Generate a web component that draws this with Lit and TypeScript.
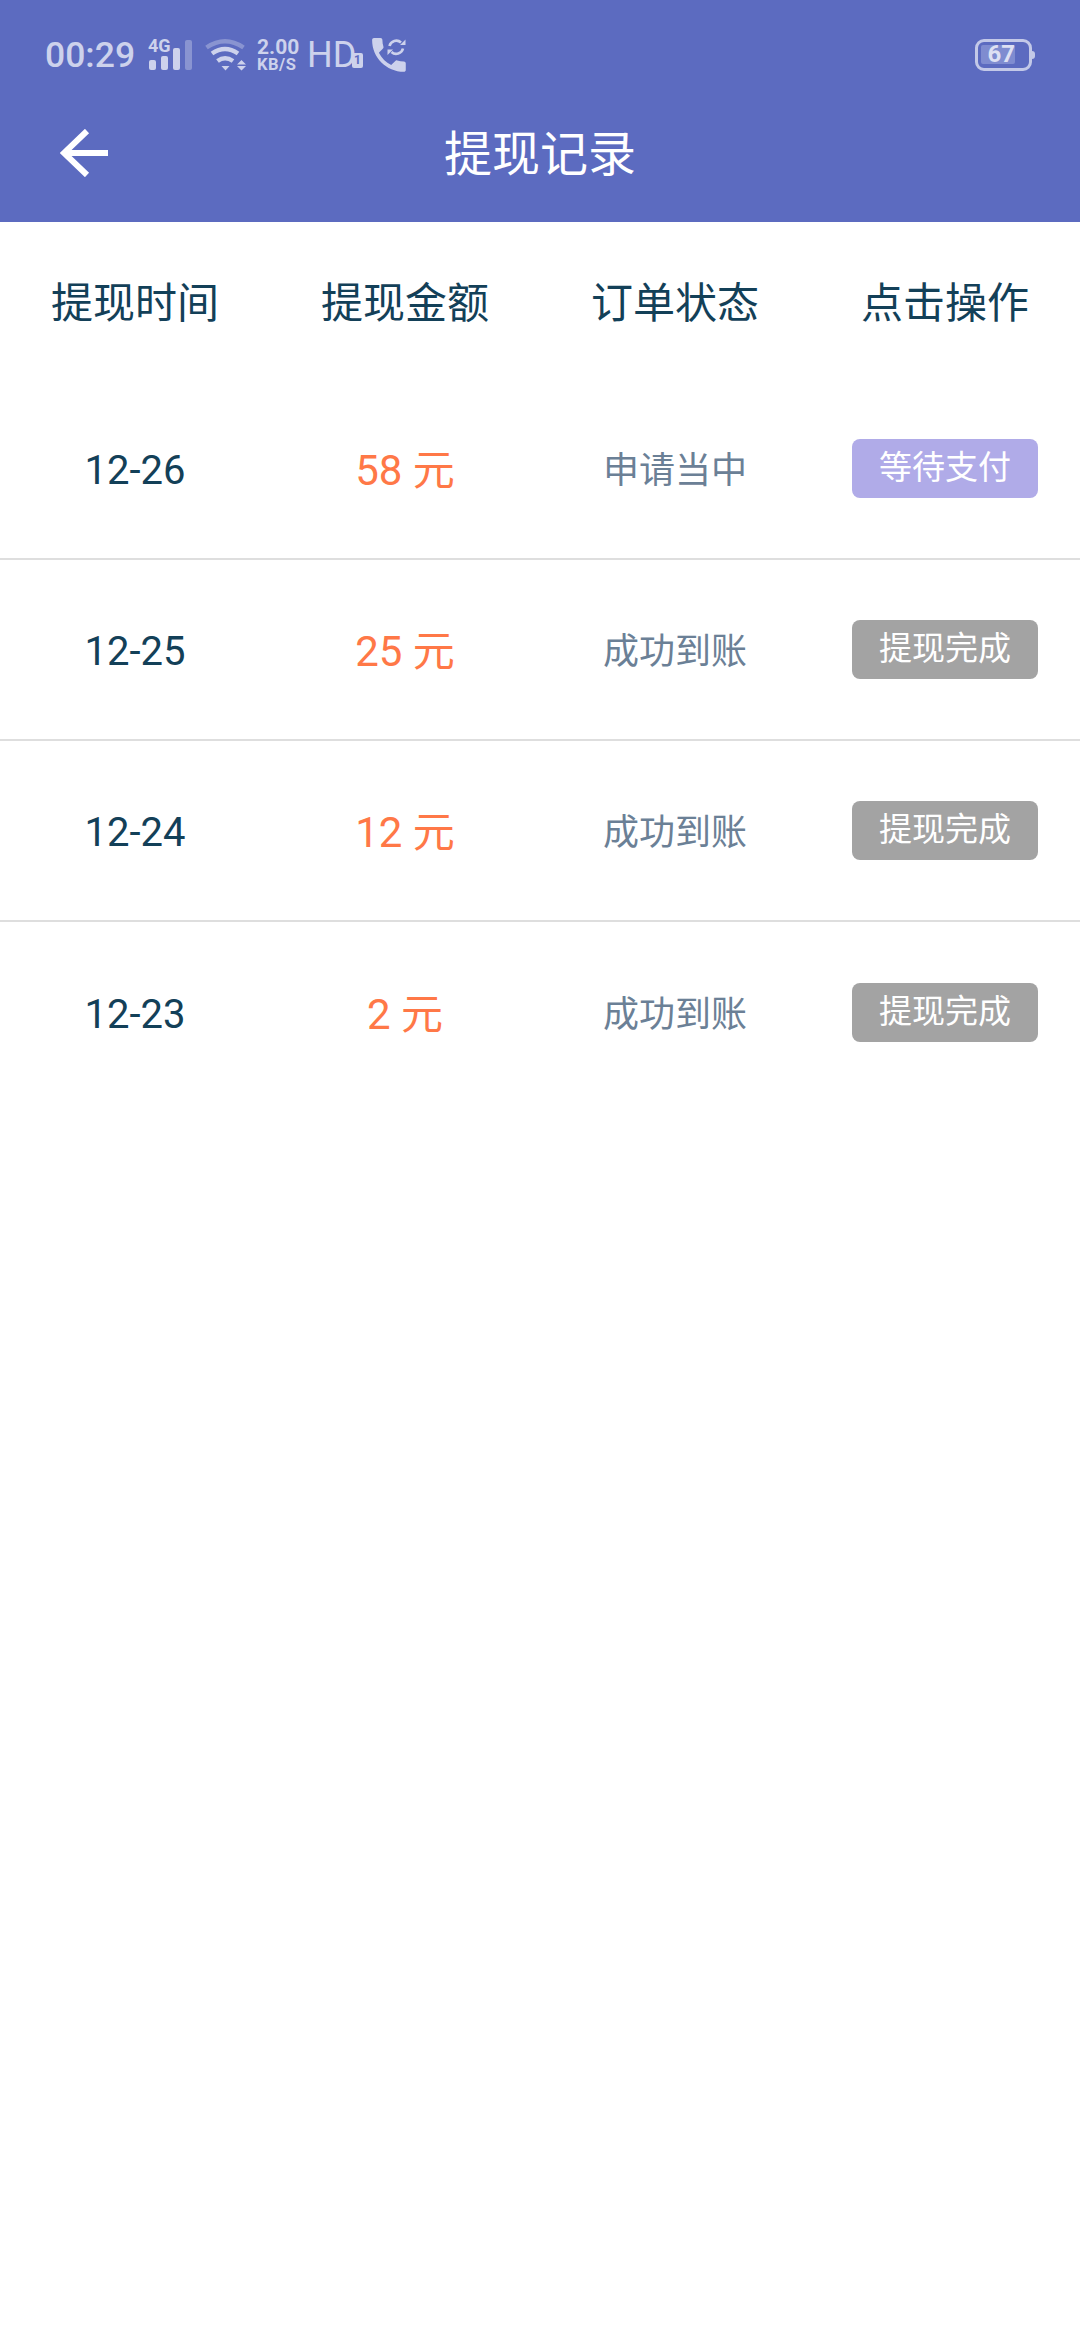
import { LitElement, html, css, svg } from 'lit';
import { customElement } from 'lit/decorators.js';

const records = [
  { date: '12-26', amount: '58 元', status: '申请当中', action: '等待支付', pending: true },
  { date: '12-25', amount: '25 元', status: '成功到账', action: '提现完成', pending: false },
  { date: '12-24', amount: '12 元', status: '成功到账', action: '提现完成', pending: false },
  { date: '12-23', amount: '2 元', status: '成功到账', action: '提现完成', pending: false },
];

const signalIcon = svg`
  <svg class="sig" width="46" height="42" viewBox="0 -4 46 42">
    <text x="0" y="14" font-family="Roboto" font-weight="700" font-size="18" fill="#cdd2ec">4G</text>
    <rect x="1" y="22" width="7" height="10" rx="2" fill="#cdd2ec"/>
    <rect x="13" y="18" width="7" height="14" rx="2" fill="#cdd2ec"/>
    <rect x="25" y="10" width="7" height="22" rx="2" fill="#cdd2ec"/>
    <rect x="37" y="2" width="7" height="30" rx="2" fill="#cdd2ec" opacity=".4"/>
  </svg>`;

const wifiIcon = svg`
  <svg width="44" height="34" viewBox="0 0 44 34" fill="none">
    <path d="M2.5 9.5Q21 -3 39.5 9.5" stroke="#cdd2ec" stroke-width="4.5" opacity=".4"/>
    <path d="M8 15.5Q21 6.5 34 15.5" stroke="#cdd2ec" stroke-width="4.5"/>
    <path d="M13.5 23Q21 17.5 29 23" stroke="#cdd2ec" stroke-width="4.5"/>
    <path d="M17.5 28H25.5L21.5 32.5Z" fill="#cdd2ec"/>
    <path d="M33 26.5H42L37.5 22Z M33 28H42L37.5 32.5Z" fill="#cdd2ec"/>
  </svg>`;

const callIcon = svg`
  <svg width="34" height="34" viewBox="0 0 34 34" fill="none">
    <g transform="translate(-5.5 -5.5) scale(1.87)">
      <path fill="#cdd2ec" d="M6.62 10.79c1.44 2.83 3.76 5.14 6.59 6.59l2.2-2.2c.27-.27.67-.36 1.02-.24 1.12.37 2.33.57 3.57.57.55 0 1 .45 1 1V20c0 .55-.45 1-1 1-9.39 0-17-7.61-17-17 0-.55.45-1 1-1h3.5c.55 0 1 .45 1 1 0 1.25.2 2.45.57 3.57.11.35.03.74-.25 1.02l-2.2 2.2z"/>
    </g>
    <path d="M17.5 8A7 7 0 0 1 29 4.5" stroke="#cdd2ec" stroke-width="2.6"/>
    <path d="M31 10.5A7 7 0 0 1 19.5 14" stroke="#cdd2ec" stroke-width="2.6"/>
    <path d="M28 7H33.5V1.5Z M21 11.5H15.5V17Z" fill="#cdd2ec"/>
  </svg>`;

const backIcon = svg`
  <svg width="48" height="48" viewBox="0 0 48 48" fill="none" stroke="#fff" stroke-width="6">
    <path d="M48 24H4"/>
    <path d="M27 2L4 24L27 46"/>
  </svg>`;

@customElement('app-root')
export class AppRoot extends LitElement {
  static styles = css`
    :host {
      display: block;
      width: 1080px;
      height: 2340px;
      background: #fff;
      font-family: Roboto, 'Noto Sans CJK SC', sans-serif;
    }
    .top {
      background: #5c6bc0;
      height: 222px;
      display: flex;
      flex-direction: column;
    }
    .status {
      height: 72px;
      padding: 37px 45px 0 45px;
      box-sizing: border-box;
      display: flex;
      align-items: center;
      color: #cdd2ec;
    }
    .time {
      font-size: 35.5px;
      font-weight: 500;
      line-height: 42px;
      width: 103px;
    }
    .sig {
      margin-right: 10px;
    }
    .speed {
      margin-left: 9px;
      width: 50px;
      display: flex;
      flex-direction: column;
    }
    .speed b {
      font-size: 21px;
      line-height: 20px;
      font-weight: 700;
    }
    .speed i {
      font-style: normal;
      font-size: 16.5px;
      line-height: 16px;
      font-weight: 700;
      letter-spacing: 0.5px;
    }
    .hd {
      font-size: 36px;
      line-height: 42px;
      width: 45px;
    }
    .sim {
      width: 11px;
      height: 15px;
      margin: 12px 9px 0 0;
      background: #cdd2ec;
      border-radius: 2px;
      color: #5c6bc0;
      font-size: 12px;
      font-weight: 700;
      line-height: 15px;
      text-align: center;
    }
    .spacer {
      flex: 1;
    }
    .battery {
      display: flex;
      align-items: center;
    }
    .cell {
      width: 57px;
      height: 32px;
      box-sizing: border-box;
      border: 3.5px solid #c3c9e8;
      border-radius: 9px;
      padding: 3px;
    }
    .level {
      width: 34px;
      height: 19px;
      background: #7f8cd0;
      border-radius: 2px;
      color: #dde0f3;
      font-size: 24px;
      font-weight: 700;
      line-height: 19px;
      text-align: right;
    }
    .nub {
      width: 3px;
      height: 8px;
      background: #c3c9e8;
      border-radius: 0 3px 3px 0;
    }
    .nav {
      flex: 1;
      padding: 12px 60px 0 60px;
      display: grid;
      grid-template-columns: 1fr auto 1fr;
      align-items: center;
    }
    .nav svg {
      display: block;
    }
    .title {
      color: #fff;
      font-size: 48px;
      line-height: 60px;
      margin-top: 3px;
    }
    .row {
      display: grid;
      grid-template-columns: repeat(4, 270px);
      align-items: center;
      justify-items: center;
      height: 181px;
      box-sizing: border-box;
      border-bottom: 2px solid #dedede;
      line-height: 50px;
    }
    .row:last-child {
      border-bottom: none;
    }
    .row > span {
      margin-top: 5px;
    }
    .head {
      height: 157px;
      border-bottom: none;
      color: #134058;
      font-size: 42px;
    }
    .head > span {
      margin-top: 6px;
    }
    .date {
      color: #134058;
      font-size: 40px;
    }
    .amount {
      color: #ff7847;
      font-size: 42px;
    }
    .state {
      color: #6b8096;
      font-size: 36px;
    }
    .btn {
      width: 186px;
      height: 59px;
      border-radius: 8px;
      background: #a3a3a3;
      color: #fff;
      font-size: 33px;
      line-height: 58px;
      text-align: center;
    }
    .btn.pending {
      background: #b0abe8;
    }
  `;

  render() {
    return html`
      <div class="top">
        <div class="status">
          <span class="time">00:29</span>
          ${signalIcon}
          ${wifiIcon}
          <span class="speed"><b>2.00</b><i>KB/S</i></span>
          <span class="hd">HD</span>
          <span class="sim">1</span>
          ${callIcon}
          <span class="spacer"></span>
          <span class="battery">
            <span class="cell"><div class="level">67</div></span>
            <span class="nub"></span>
          </span>
        </div>
        <div class="nav">
          ${backIcon}
          <span class="title">提现记录</span>
        </div>
      </div>
      <div class="row head">
        <span>提现时间</span>
        <span>提现金额</span>
        <span>订单状态</span>
        <span>点击操作</span>
      </div>
      ${records.map(
        (r) => html`
          <div class="row">
            <span class="date">${r.date}</span>
            <span class="amount">${r.amount}</span>
            <span class="state">${r.status}</span>
            <div class="btn ${r.pending ? 'pending' : ''}">${r.action}</div>
          </div>
        `
      )}
    `;
  }
}
